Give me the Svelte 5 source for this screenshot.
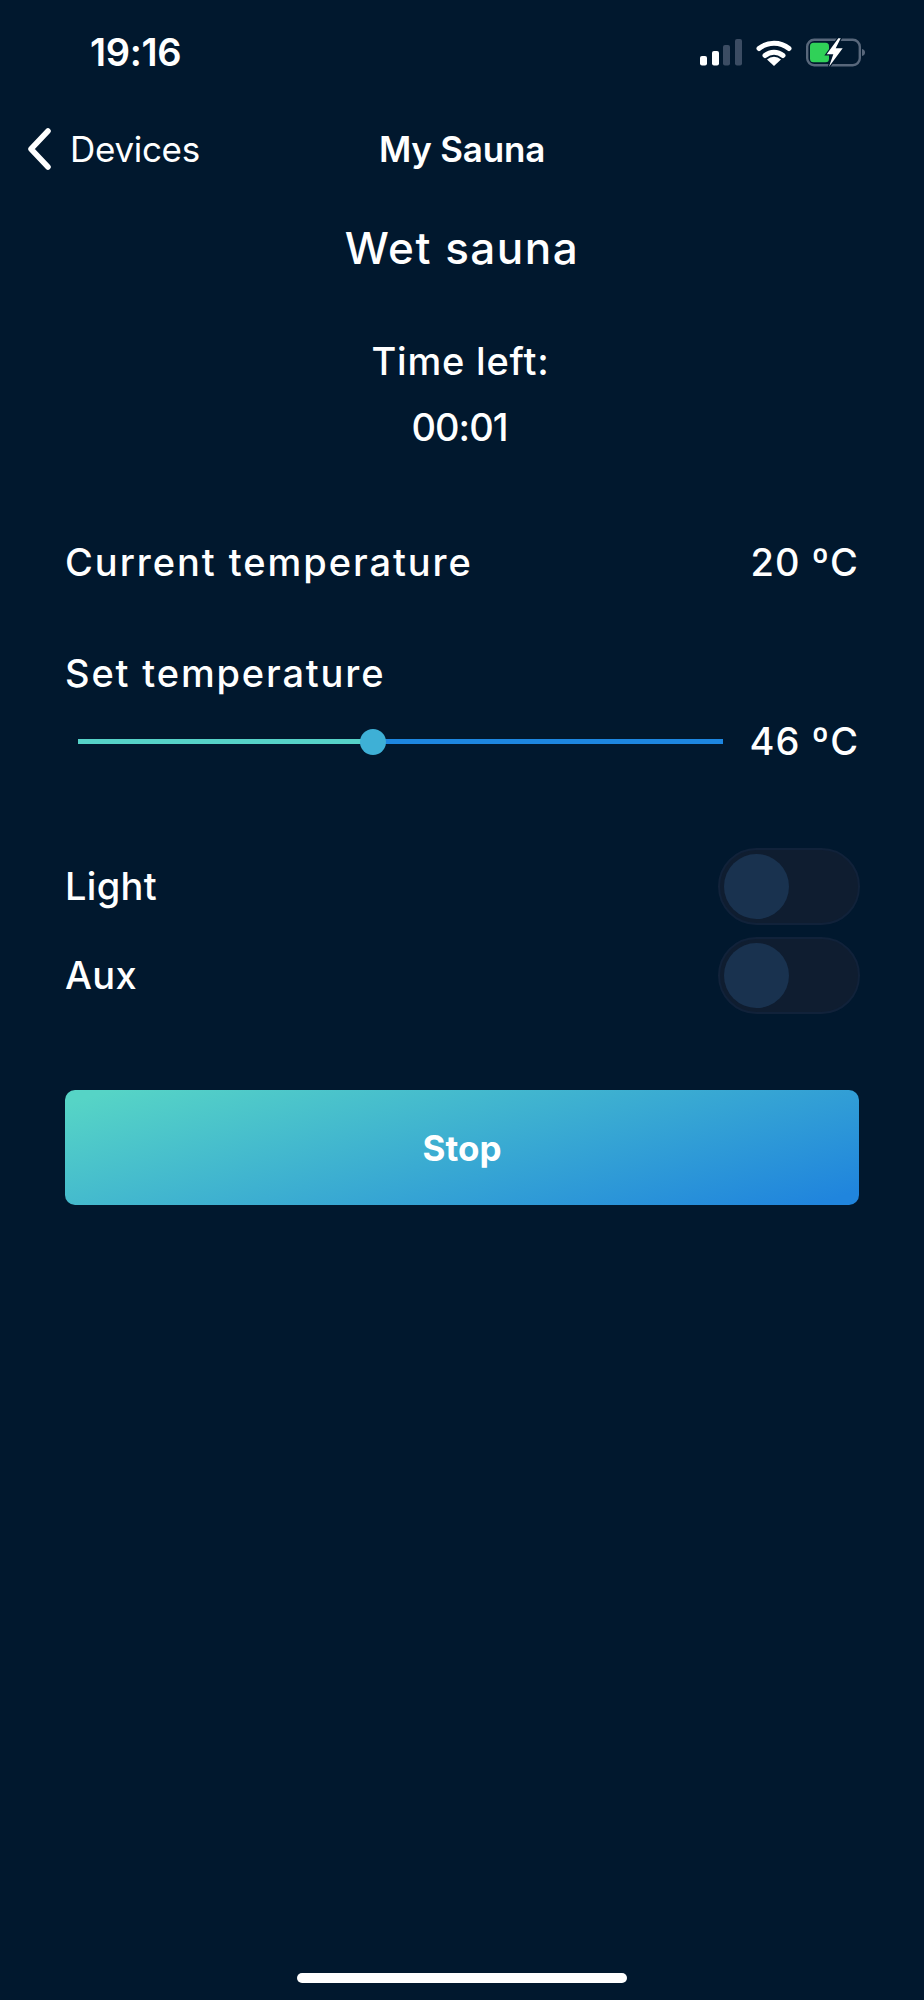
<script>
  const rows = [{ label: 'Light' }, { label: 'Aux' }];
</script>

<div class="screen">
  <header class="status">
    <span class="clock">19:16</span>
    <svg class="status-icons" width="170" height="34" viewBox="0 0 170 34" fill="none">
      <rect x="0" y="18" width="7" height="9.500" rx="2" fill="#fff"/>
      <rect x="12" y="13" width="7" height="14.500" rx="2" fill="#fff"/>
      <rect x="23" y="7" width="7" height="20.500" rx="2" fill="#3b4c63"/>
      <rect x="35" y="1" width="7" height="26.500" rx="2" fill="#3b4c63"/>
      <path d="M59 10.500a24 24 0 0 1 30 0" stroke="#fff" stroke-width="5" stroke-linecap="round"/>
      <path d="M65 17.500a14 14 0 0 1 18 0" stroke="#fff" stroke-width="5" stroke-linecap="round"/>
      <path d="M74 28l-7-6.600a10.500 10.500 0 0 1 14 0z" fill="#fff"/>
      <rect x="107.200" y="1.800" width="52.600" height="25.400" rx="7" stroke="#58677b" stroke-width="2.400"/>
      <path d="M162 11c2 .5 3 1.800 3 3.500s-1 3-3 3.500z" fill="#58677b"/>
      <rect x="110" y="4.700" width="19" height="19.600" rx="3.500" fill="#30d158"/>
      <path d="M138.300.3L126.700 16.300h6.600L129 28.700l13.700-18.400h-7L140.700.3z" fill="#fff" stroke="#01182e" stroke-width="2.400" paint-order="stroke"/>
    </svg>
  </header>

  <nav class="nav">
    <div class="back">
      <svg width="26" height="42" viewBox="0 0 26 42" fill="none">
        <path d="M22 3L5 21l17 18" stroke="#fff" stroke-width="5.500" stroke-linecap="round" stroke-linejoin="round"/>
      </svg>
      <span>Devices</span>
    </div>
    <div class="nav-title">My Sauna</div>
  </nav>

  <main class="content">
    <h1>Wet sauna</h1>
    <div class="time first">Time left:</div>
    <div class="time digits">00:01</div>

    <div class="row current">
      <span class="long">Current temperature</span>
      <span class="value">20 ºC</span>
    </div>

    <div class="set-label long2">Set temperature</div>
    <div class="slider-row">
      <div class="slider">
        <div class="fill"></div>
        <div class="thumb"></div>
      </div>
      <span class="value">46 ºC</span>
    </div>

    <div class="toggles">
      {#each rows as row}
        <div class="toggle-row">
          <span>{row.label}</span>
          <div class="toggle"><div class="knob"></div></div>
        </div>
      {/each}
    </div>

    <button class="stop">Stop</button>
  </main>

  <div class="home"></div>
</div>

<style>
  :global(body) { margin: 0; background: #01182e; }
  .screen {
    position: relative;
    width: 924px; height: 2000px; background: #01182e; color: #fff;
    font-family: Inter, sans-serif;
    display: flex; flex-direction: column; overflow: hidden;
  }
  .status {
    height: 104px; box-sizing: border-box; padding: 38px 54px 0 90px;
    display: flex; justify-content: space-between; align-items: flex-start;
  }
  .clock {
    font-weight: 600; font-size: 38px; line-height: 28px;
    letter-spacing: -0.3px;
  }
  .status-icons { display: block; }
  .nav {
    height: 92px; position: relative;
    display: flex; align-items: center; justify-content: center;
    font-size: 35px; line-height: 42px;
  }
  .nav > div { transform: translateY(-1px); }
  .back {
    position: absolute; left: 26px; top: 25px; display: flex; align-items: center; gap: 18px;
    font-weight: 400; letter-spacing: -0.3px;
  }
  .back svg { display: block; }
  .nav-title { font-weight: 600; letter-spacing: -0.2px; }
  .content { display: flex; flex-direction: column; padding: 0 65px; }
  h1 {
    margin: 14px 0 0; height: 76px; line-height: 76px; text-align: center;
    font-size: 44px; font-weight: 500; letter-spacing: 1.500px;
  }
  .time {
    text-align: center; font-size: 38px; font-weight: 500; height: 66px; line-height: 66px;
    letter-spacing: 0.800px; padding-right: 3px;
  }
  .digits { letter-spacing: -1px; padding-right: 5px; }
  .first { margin-top: 42px; }
  .row {
    display: flex; justify-content: space-between; align-items: center;
    font-size: 38px; font-weight: 500;
  }
  .long { letter-spacing: 1.950px; }
  .long2 { letter-spacing: 1.850px; }
  .value { letter-spacing: 1px; font-size: 38px; font-weight: 500; }
  .current { margin-top: 69px; height: 66px; }
  .set-label {
    margin-top: 45px; height: 66px; line-height: 66px;
    font-size: 38px; font-weight: 500;
  }
  .slider-row {
    display: flex; align-items: center; justify-content: space-between; height: 70px;
  }
  .slider {
    position: relative; margin-left: 13px; width: 645px; height: 5px; background: #1d86e0;
  }
  .fill { width: 295px; height: 100%; background: #56d2c8; }
  .thumb {
    position: absolute; left: 282px; top: -10px; width: 26px; height: 26px; border-radius: 50%;
    background: #3eb0d6;
  }
  .toggles { margin-top: 71px; display: flex; flex-direction: column; gap: 11px; }
  .toggle-row {
    display: flex; justify-content: space-between; align-items: center; height: 78px;
    font-size: 38px; font-weight: 500; letter-spacing: 0.300px;
  }
  .toggle {
    width: 142px; height: 77px; box-sizing: border-box; border-radius: 39px;
    background: #0f1d30; border: 2px solid #11223a; padding: 4px; margin-right: -1px;
  }
  .knob { width: 65px; height: 65px; border-radius: 50%; background: #19324f; }
  .stop {
    margin-top: 76px; height: 115px; border: 0; border-radius: 10px; color: #fff;
    font-family: inherit; font-size: 35px; font-weight: 700;
    background: linear-gradient(164deg, #56d4c6 4%, #2085dd 96%);
  }
  .home {
    position: absolute; left: 297px; top: 1973px; width: 330px; height: 10px;
    border-radius: 5px; background: #fff;
  }
</style>
